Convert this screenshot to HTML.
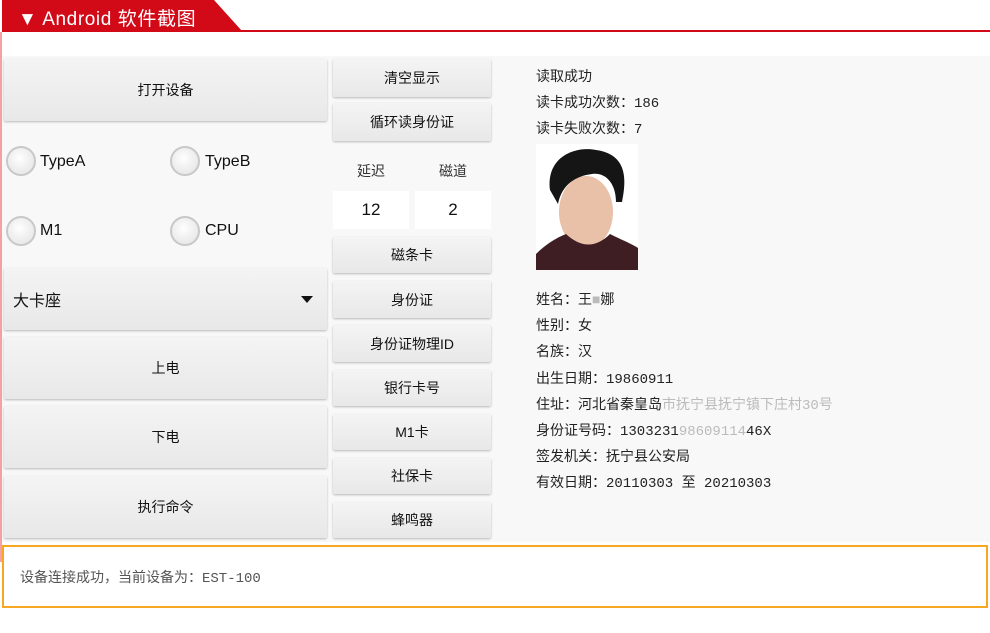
<!DOCTYPE html>
<html><head><meta charset="utf-8"><style>
*{margin:0;padding:0;box-sizing:border-box}
body{width:990px;height:633px;background:#fff;position:relative;overflow:hidden;font-family:"Liberation Sans","Noto Sans CJK SC",sans-serif}
.a{position:absolute}
.btn{position:absolute;background:linear-gradient(#f4f4f4,#e8e8e8);border-radius:2px;box-shadow:0 1px 2px #b8b8b8;display:flex;align-items:center;justify-content:center;font-size:14px;color:#111}
.rad{position:absolute;width:30px;height:30px;border-radius:50%;border:2px solid #c8c8c8;background:radial-gradient(circle at 45% 40%,#fff 0,#f2f2f2 40%,#e2e2e2 100%)}
.rl{position:absolute;font-size:16px;color:#111}
.t{position:absolute;left:536px;font-family:"Liberation Mono","Noto Sans CJK SC",monospace;font-size:14px;color:#222;white-space:nowrap}
.inp{position:absolute;background:#fff;font-size:17px;display:flex;align-items:center;justify-content:center;color:#111}
</style></head><body>
<div class="a" style="left:2px;top:0;width:240px;height:31px;background:#d20a18;clip-path:polygon(0 0,212px 0,240px 31px,0 31px)"></div>
<div class="a" style="left:18px;top:4px;color:#fff;font-size:19px;letter-spacing:0.6px">▼ Android 软件截图</div>
<div class="a" style="left:2px;top:30px;width:988px;height:2px;background:#d20a18"></div>
<div class="a" style="left:0;top:32px;width:2px;height:530px;background:#f4a0a4"></div>
<div class="a" style="left:2px;top:56px;width:988px;height:486px;background:#f8f8f8"></div>

<div class="btn" style="left:4px;top:59px;width:323px;height:62px">打开设备</div>
<div class="rad" style="left:6px;top:146px"></div><div class="rl" style="left:40px;top:153px">TypeA</div>
<div class="rad" style="left:170px;top:146px"></div><div class="rl" style="left:205px;top:153px">TypeB</div>
<div class="rad" style="left:6px;top:216px"></div><div class="rl" style="left:40px;top:222px">M1</div>
<div class="rad" style="left:170px;top:216px"></div><div class="rl" style="left:205px;top:222px">CPU</div>
<div class="btn" style="left:4px;top:268px;width:323px;height:62px;justify-content:flex-start;padding-left:9px;font-size:16px">大卡座<span style="position:absolute;right:14px;top:28px;border-left:6px solid transparent;border-right:6px solid transparent;border-top:7px solid #111"></span></div>
<div class="btn" style="left:4px;top:337px;width:323px;height:62px">上电</div>
<div class="btn" style="left:4px;top:406px;width:323px;height:62px">下电</div>
<div class="btn" style="left:4px;top:476px;width:323px;height:62px">执行命令</div>

<div class="btn" style="left:333px;top:59px;width:158px;height:38px">清空显示</div>
<div class="btn" style="left:333px;top:103px;width:158px;height:38px">循环读身份证</div>
<div class="a" style="left:357px;top:161px;font-size:14px;color:#333">延迟</div>
<div class="a" style="left:439px;top:161px;font-size:14px;color:#333">磁道</div>
<div class="inp" style="left:333px;top:191px;width:76px;height:38px">12</div>
<div class="inp" style="left:415px;top:191px;width:76px;height:38px">2</div>
<div class="btn" style="left:333px;top:237px;width:158px;height:36px">磁条卡</div>
<div class="btn" style="left:333px;top:281px;width:158px;height:37px">身份证</div>
<div class="btn" style="left:333px;top:325px;width:158px;height:37px">身份证物理ID</div>
<div class="btn" style="left:333px;top:370px;width:158px;height:36px">银行卡号</div>
<div class="btn" style="left:333px;top:414px;width:158px;height:36px">M1卡</div>
<div class="btn" style="left:333px;top:458px;width:158px;height:36px">社保卡</div>
<div class="btn" style="left:333px;top:502px;width:158px;height:36px">蜂鸣器</div>

<div class="t" style="top:66px">读取成功</div>
<div class="t" style="top:92px">读卡成功次数：186</div>
<div class="t" style="top:118px">读卡失败次数：7</div>
<svg class="a" style="left:536px;top:144px" width="102" height="126" viewBox="0 0 102 126">
<rect width="102" height="126" fill="#fff"/>
<ellipse cx="50" cy="68" rx="27" ry="36" fill="#e9c0a8"/>
<path d="M14 46 C10 12 40 2 60 6 C88 10 92 30 86 58 L80 58 C80 40 70 28 56 30 C40 32 26 40 22 60 Z" fill="#151515"/>
<path d="M0 126 L0 110 C10 100 20 94 30 90 C45 104 60 104 74 90 C86 96 96 100 102 104 L102 126 Z" fill="#3e1e22"/>
</svg>
<div class="t" style="top:289px">姓名：王<span style="color:#bbb">■</span>娜</div>
<div class="t" style="top:315px">性别：女</div>
<div class="t" style="top:341px">名族：汉</div>
<div class="t" style="top:368px">出生日期：19860911</div>
<div class="t" style="top:394px">住址：河北省秦皇岛<span style="color:#bbb">市抚宁县抚宁镇下庄村30号</span></div>
<div class="t" style="top:420px">身份证号码：1303231<span style="color:#bbb">98609114</span>46X</div>
<div class="t" style="top:446px">签发机关：抚宁县公安局</div>
<div class="t" style="top:472px">有效日期：20110303 至 20210303</div>

<div class="a" style="left:2px;top:545px;width:986px;height:63px;border:2px solid #f7a823;background:#fff"></div>
<div class="a" style="left:20px;top:567px;font-family:'Liberation Mono','Noto Sans CJK SC',monospace;font-size:14px;color:#555">设备连接成功，当前设备为：EST-100</div>
</body></html>
